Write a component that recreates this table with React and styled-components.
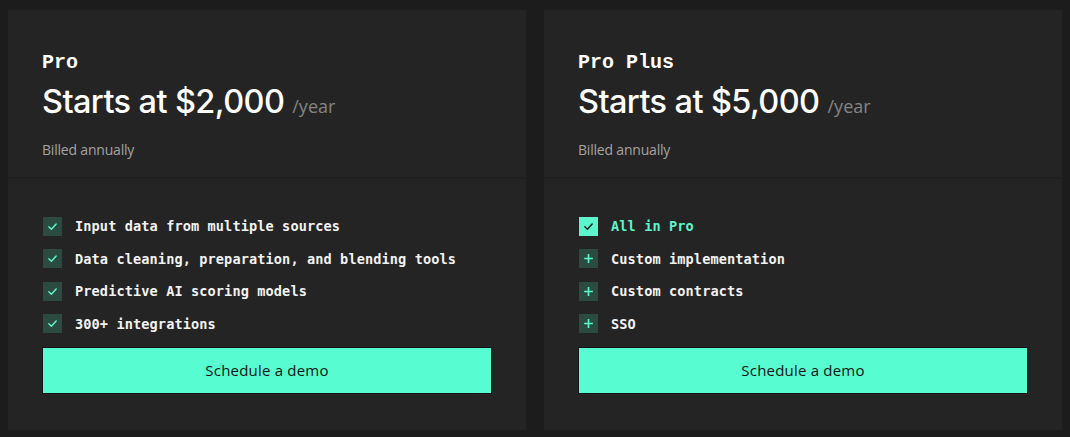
import React from "react";
import styled, { createGlobalStyle } from "styled-components";

const Global = createGlobalStyle`
  html, body { margin: 0; padding: 0; background: #1c1c1c; }
  body { font-family: "Inter", "Liberation Sans", sans-serif; }
  * { box-sizing: border-box; }
`;

const Page = styled.div`
  display: grid;
  grid-template-columns: 518px 518px;
  gap: 18px;
  padding: 10px 8px 7px 8px;
  width: 1070px;
  height: 437px;
`;

const Card = styled.div`
  background: #242424;
  display: flex;
  flex-direction: column;
  height: 420px;
`;

const Top = styled.div`
  height: 169px;
  padding: 43px 34px 0 34px;
  border-bottom: 2px solid #1f1f1f;
`;

const PlanName = styled.div`
  font-family: "Liberation Mono", "DejaVu Sans Mono", monospace;
  font-size: 20px;
  font-weight: 700;
  line-height: 20px;
  color: #ffffff;
`;

const PriceRow = styled.div`
  display: flex;
  align-items: baseline;
  gap: 8px;
  margin-top: 10px;
`;

const Price = styled.span`
  font-family: "Inter", "Open Sans", sans-serif;
  font-size: 32.5px;
  font-weight: 500;
  letter-spacing: -0.6px;
  color: #ffffff;
  line-height: 38px;
`;

const Per = styled.span`
  font-family: "Open Sans", "Inter", sans-serif;
  font-size: 18px;
  color: #858585;
`;

const Billed = styled.div`
  margin-top: 19px;
  font-family: "Open Sans", "Inter", sans-serif;
  font-size: 14px;
  color: #a3a3a3;
  letter-spacing: -0.2px;
`;

const Bottom = styled.div`
  flex: 1;
  padding: 38px 34px 0 34px;
  display: flex;
  flex-direction: column;
`;

const List = styled.ul`
  list-style: none;
  margin: 0;
  padding: 0;
  display: flex;
  flex-direction: column;
  gap: 14.5px;
`;

const Item = styled.li`
  display: flex;
  align-items: center;
  gap: 13px;
  height: 18px;
  font-family: "DejaVu Sans Mono", "Liberation Mono", monospace;
  font-size: 13.6px;
  font-weight: 700;
  color: ${(p) => (p.$accent ? "#5cf5cb" : "#f2f2f2")};
  letter-spacing: 0.1px;
`;

const IconBox = styled.span`
  width: 19px;
  height: 19px;
  flex: none;
  display: flex;
  align-items: center;
  justify-content: center;
  margin-left: 1px;
  background: ${(p) => (p.$filled ? "#5cf5cb" : "#2b4a40")};
  color: ${(p) => (p.$filled ? "#1a1a1a" : "#5cf5cb")};
`;

const Button = styled.button`
  margin-top: 14px;
  height: 47px;
  width: 450px;
  border: 1px solid #161616;
  background: #57fdd0;
  color: #151515;
  font-family: "Open Sans", "Inter", sans-serif;
  font-size: 15px;
  letter-spacing: 0.2px;
  cursor: pointer;
`;

const Check = () => (
  <svg width="11" height="11" viewBox="0 0 12 12" fill="none">
    <path d="M2 6.3 L4.8 9 L10 3.2" stroke="currentColor" strokeWidth="1.6" strokeLinecap="round" strokeLinejoin="round" />
  </svg>
);

const Plus = () => (
  <svg width="11" height="11" viewBox="0 0 12 12" fill="none">
    <path d="M6 1.2 V10.8 M1.2 6 H10.8" stroke="currentColor" strokeWidth="1.8" />
  </svg>
);

const plans = [
  {
    name: "Pro",
    price: "$2,000",
    features: [
      { text: "Input data from multiple sources", icon: "check" },
      { text: "Data cleaning, preparation, and blending tools", icon: "check" },
      { text: "Predictive AI scoring models", icon: "check" },
      { text: "300+ integrations", icon: "check" },
    ],
  },
  {
    name: "Pro Plus",
    price: "$5,000",
    features: [
      { text: "All in Pro", icon: "check", accent: true },
      { text: "Custom implementation", icon: "plus" },
      { text: "Custom contracts", icon: "plus" },
      { text: "SSO", icon: "plus" },
    ],
  },
];

export default function App() {
  return (
    <>
      <Global />
      <Page>
        {plans.map((p) => (
          <Card key={p.name}>
            <Top>
              <PlanName>{p.name}</PlanName>
              <PriceRow>
                <Price>Starts at {p.price}</Price>
                <Per>/year</Per>
              </PriceRow>
              <Billed>Billed annually</Billed>
            </Top>
            <Bottom>
              <List>
                {p.features.map((f) => (
                  <Item key={f.text} $accent={f.accent}>
                    <IconBox $filled={f.accent}>
                      {f.icon === "check" ? <Check /> : <Plus />}
                    </IconBox>
                    {f.text}
                  </Item>
                ))}
              </List>
              <Button>Schedule a demo</Button>
            </Bottom>
          </Card>
        ))}
      </Page>
    </>
  );
}
